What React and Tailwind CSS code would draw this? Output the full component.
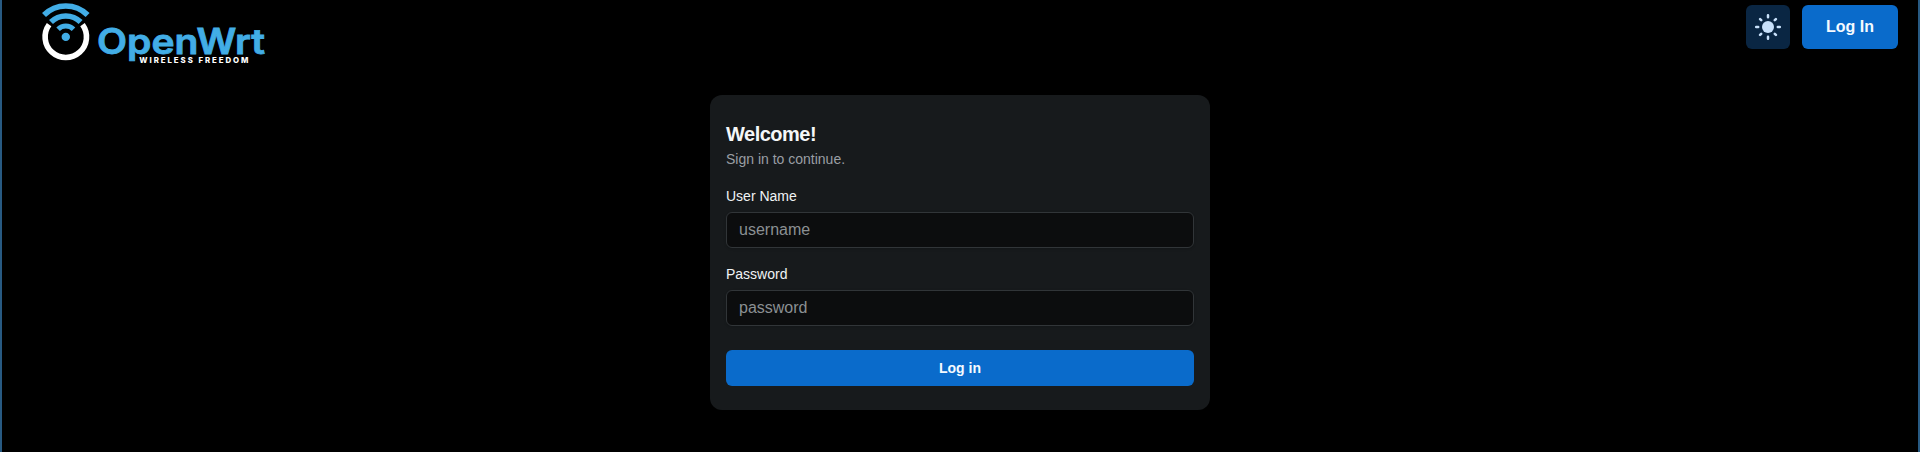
const FONT = "font-['Liberation_Sans',Arial,sans-serif]";

function Logo() {
  return (
    <svg className="h-[68px] w-[240px]" viewBox="35 0 240 68" fill="none" role="img" aria-label="OpenWrt Wireless Freedom">
      <g stroke="#42ade6" strokeWidth="5.6">
        <path d="M44 15.1A30.8 30.8 0 0 1 87.6 15.1" />
        <path d="M51 22.1A20.9 20.9 0 0 1 80.6 22.1" />
        <path d="M58.1 29.2A10.9 10.9 0 0 1 73.5 29.2" strokeWidth="5" />
      </g>
      <circle cx="65.8" cy="36.9" r="4.2" fill="#42ade6" />
      <path d="M49.1 24.6A20.7 20.7 0 1 0 82.5 24.6" stroke="#fff" strokeWidth="5.6" />
      <text x="97" y="53.5" textLength="168" lengthAdjust="spacingAndGlyphs" fill="#42ade6" stroke="#42ade6" strokeWidth="0.8" className="font-['Inter',sans-serif] text-[35px] font-semibold">OpenWrt</text>
      <text x="139.3" y="62.7" textLength="109" lengthAdjust="spacing" fill="#fff" className="font-['Inter',sans-serif] text-[7.8px] font-extrabold">WIRELESS FREEDOM</text>
    </svg>
  );
}

function SunIcon() {
  return (
    <svg className="size-7" viewBox="-14 -14 28 28" fill="none" stroke="#c8e1fb" strokeWidth="2.5" strokeLinecap="round">
      <circle r="6" fill="#c8e1fb" stroke="none" />
      <path d="M0-9.8V-11.8M0 9.8V11.8M-9.8 0H-11.8M9.8 0H11.8M-6.8-6.8-7.9-7.9M6.8-6.8 7.9-7.9M-6.8 6.8-7.9 7.9M6.8 6.8 7.9 7.9" />
    </svg>
  );
}

function Field({ label, placeholder, type }) {
  return (
    <label className="block">
      <span className="block text-sm leading-[22px] text-[#f0f3f5]">{label}</span>
      <input
        type={type}
        placeholder={placeholder}
        className="mt-[5px] block h-9 w-full rounded-md border border-[#313538] bg-[#0c0d0e] px-3 text-base text-white placeholder:text-[#8b9093] shadow-sm outline-none"
      />
    </label>
  );
}

export default function App() {
  return (
    <div className={`${FONT} h-[452px] overflow-hidden border-x-2 border-[#285a82] bg-black text-white`}>
      <header className="flex h-[68px] items-start justify-between pr-5 pl-[33px]">
        <Logo />
        <div className="flex gap-3 pt-[5px]">
          <button className="flex size-11 items-center justify-center rounded-md bg-[#0a2643]" aria-label="Toggle theme">
            <SunIcon />
          </button>
          <button className="h-11 w-24 rounded-md bg-[#0a6bcb] text-base font-bold text-[#f5faff]">Log In</button>
        </div>
      </header>
      <main className="mx-auto mt-[27px] h-[315px] w-[500px] rounded-xl bg-[#171a1c] px-4 pt-[26px]">
        <h1 className="text-xl leading-[26px] font-semibold tracking-[-0.5px] text-[#f5f7f8]">Welcome!</h1>
        <p className="mt-px text-sm leading-[22px] text-[#9a9fa4]">Sign in to continue.</p>
        <form className="mt-[15px]" onSubmit={(e) => e.preventDefault()}>
          <Field label="User Name" placeholder="username" type="text" />
          <div className="mt-[15px]">
            <Field label="Password" placeholder="password" type="password" />
          </div>
          <button className="mt-6 h-9 w-full rounded-md bg-[#0a6bcb] text-sm font-bold text-[#f5faff]">Log in</button>
        </form>
      </main>
    </div>
  );
}
